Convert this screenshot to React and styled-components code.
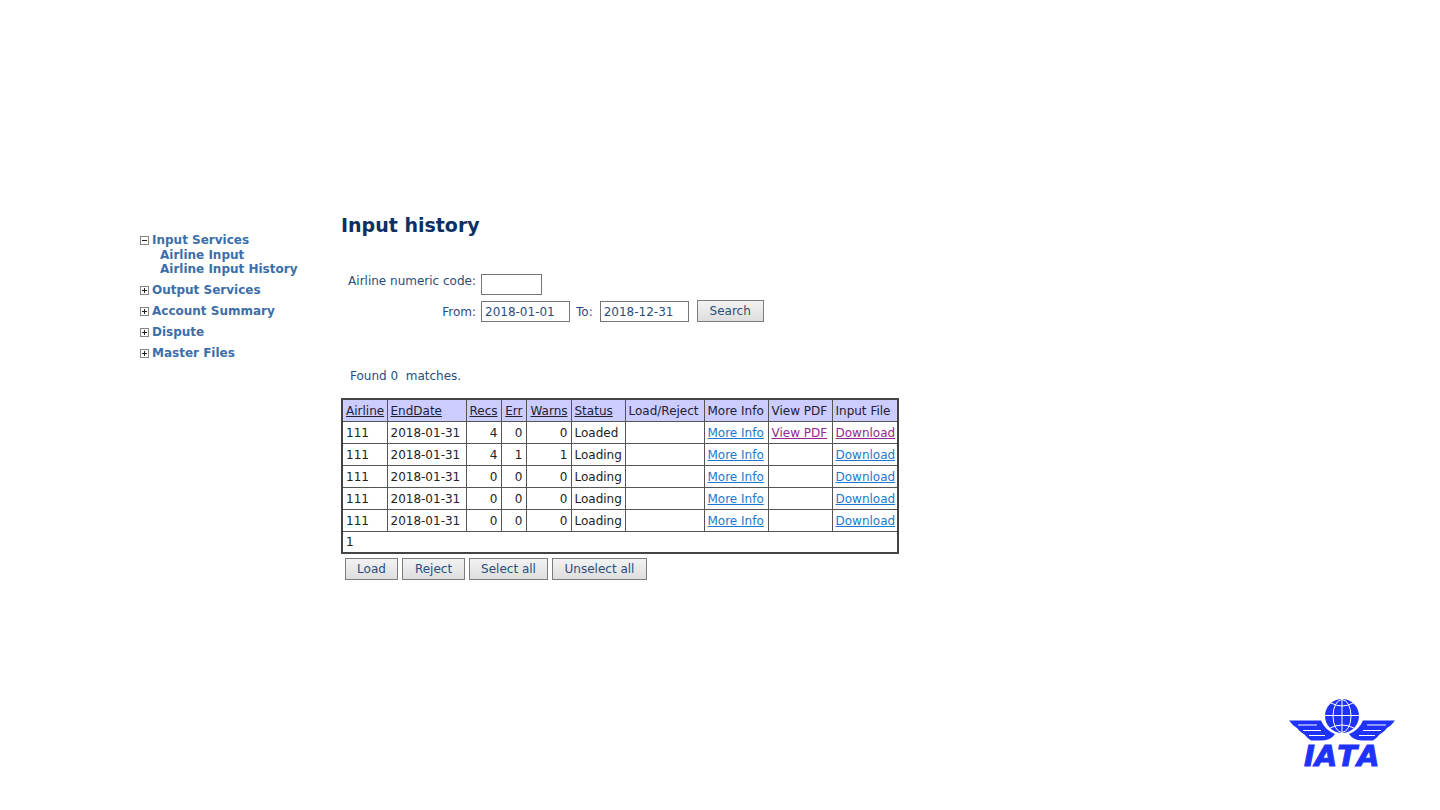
import React from 'react';
import styled, { createGlobalStyle } from 'styled-components';

const GlobalStyle = createGlobalStyle`
  *, *::before, *::after { box-sizing: border-box; }
  body {
    margin: 0;
    background: #fff;
    color: #2b4d7c;
    font: 12px/14px "DejaVu Sans", sans-serif;
  }
`;

const Page = styled.div`
  display: flex;
  flex-direction: column;
  min-height: 100vh;
  padding: 213px 44px 36px 140px;
`;

const Columns = styled.div`
  display: flex;
  align-items: flex-start;
`;

const Sidebar = styled.nav`
  flex: 0 0 201px;
  padding-top: 20px;
`;

const MenuList = styled.ul`
  display: flex;
  flex-direction: column;
  gap: 7px;
  margin: 0;
  padding: 0;
  list-style: none;
`;

const SubList = styled.ul`
  margin: 0;
  padding: 1px 0 0 20px;
  list-style: none;
`;

const MenuRow = styled.div`
  display: flex;
  align-items: center;
  gap: 3px;
`;

const MenuLink = styled.a`
  color: #3c6ea9;
  font-weight: bold;
  text-decoration: none;
  white-space: nowrap;
`;

const Toggle = styled.button`
  display: flex;
  width: 9px;
  height: 9px;
  padding: 0;
  border: 0;
  background: none;
`;

const Main = styled.main`
  min-width: 0;
`;

const Title = styled.h1`
  margin: 0;
  color: #0c3063;
  font-size: 19px;
  line-height: 24px;
`;

const SearchForm = styled.form`
  display: grid;
  grid-template-columns: 135px auto;
  justify-content: start;
  gap: 5px;
  margin-top: 37px;
`;

const FieldLabel = styled.label`
  text-align: right;
  padding-top: ${(p) => p.$top}px;
`;

const FieldRow = styled.div`
  display: flex;
  align-items: center;
`;

const TextBox = styled.input`
  width: ${(p) => p.$width}px;
  height: 21px;
  padding: 1px 3px 0;
  border: 1px solid #757575;
  background: #fff;
  color: inherit;
  font: inherit;
`;

const ToLabel = styled.label`
  padding: 1px 7px 0 6px;
`;

const Button = styled.button`
  height: 22px;
  min-width: ${(p) => p.$width}px;
  padding: 0;
  border: 1px solid #7c7c7c;
  background: linear-gradient(#f2f2f2, #dedede);
  color: inherit;
  font: inherit;
`;

const SearchButton = styled(Button)`
  margin-left: 8px;
`;

const Matches = styled.p`
  margin: 47px 0 15px 9px;
  white-space: pre;
`;

const HistoryTable = styled.table`
  width: 558px;
  table-layout: fixed;
  border-collapse: collapse;
  border: 2px solid #444;
  color: #222;
`;

const Cell = styled.td`
  height: 22px;
  padding: 1px 3px 0;
  border: 1px solid #555;
  text-align: ${(p) => (p.$right ? 'right' : 'left')};
  white-space: nowrap;
`;

const HeadCell = styled(Cell)`
  background: #ccf;
  color: #223;
  font-weight: normal;
`;

const SortLink = styled.a`
  color: inherit;
`;

const DataLink = styled.a`
  color: ${(p) => (p.$visited ? '#93278f' : '#1c78d2')};
`;

const Actions = styled.div`
  display: flex;
  gap: 4px;
  margin: 4px 0 0 4px;
`;

const Footer = styled.footer`
  display: flex;
  justify-content: flex-end;
  margin-top: auto;
`;

const LogoText = styled.text`
  font: italic bold 29px "DejaVu Sans", sans-serif;
  font-kerning: none;
  stroke: #1e32fa;
`;

function ToggleIcon({ open }) {
  return (
    <svg width="9" height="9" viewBox="0 0 9 9" shapeRendering="crispEdges" aria-hidden="true">
      <rect x="0.5" y="0.5" width="8" height="8" fill="#fff" stroke="#858585" />
      <path d={open ? 'M2 4.5h5' : 'M2 4.5h5M4.5 2v5'} stroke="#222" />
    </svg>
  );
}

function Logo() {
  const wing = 'M1 21.5H33Q37 31 47 35Q43 41 34 41.500H23Q20 40 17 36Q11 32 9 29Q4 26 1 21.500Z';
  const feathers = 'M10 26H29M15 31.5H33M21 36.5H37';
  return (
    <svg width="108" height="75" viewBox="0 0 108 75" role="img" aria-label="IATA">
      <g fill="#1e32fa">
        <circle cx="54" cy="17" r="17" />
        <path d={wing} />
        <path d={wing} transform="matrix(-1 0 0 1 108 0)" />
        <LogoText x="16" y="67">IATA</LogoText>
      </g>
      <g fill="none" stroke="#fff">
        <path d="M37 16.5H71M54 0V34M43 4Q54 10 65 4M42 29Q54 23 66 29" />
        <ellipse cx="54" cy="17" rx="9" ry="16.5" />
        <path d={feathers} />
        <path d={feathers} transform="matrix(-1 0 0 1 108 0)" />
      </g>
    </svg>
  );
}

const MENU = [
  { label: 'Input Services', children: ['Airline Input', 'Airline Input History'] },
  { label: 'Output Services' },
  { label: 'Account Summary' },
  { label: 'Dispute' },
  { label: 'Master Files' },
];

const COLUMNS = [
  { label: 'Airline', width: 45, sort: true },
  { label: 'EndDate', width: 79, sort: true },
  { label: 'Recs', width: 35, sort: true, right: true },
  { label: 'Err', width: 25, sort: true, right: true },
  { label: 'Warns', width: 45, sort: true, right: true },
  { label: 'Status', width: 54, sort: true },
  { label: 'Load/Reject', width: 79 },
  { label: 'More Info', width: 64 },
  { label: 'View PDF', width: 64 },
  { label: 'Input File', width: 66 },
];

const ROWS = [
  { recs: 4, err: 0, warns: 0, status: 'Loaded', pdf: true },
  { recs: 4, err: 1, warns: 1, status: 'Loading' },
  { recs: 0, err: 0, warns: 0, status: 'Loading' },
  { recs: 0, err: 0, warns: 0, status: 'Loading' },
  { recs: 0, err: 0, warns: 0, status: 'Loading' },
];

export default function App() {
  return (
    <>
      <GlobalStyle />
      <Page>
        <Columns>
          <Sidebar>
            <MenuList>
              {MENU.map((item) => (
                <li key={item.label}>
                  <MenuRow>
                    <Toggle type="button" aria-label={`Toggle ${item.label}`}>
                      <ToggleIcon open={Boolean(item.children)} />
                    </Toggle>
                    <MenuLink href="#">{item.label}</MenuLink>
                  </MenuRow>
                  {item.children && (
                    <SubList>
                      {item.children.map((child) => (
                        <li key={child}>
                          <MenuLink href="#">{child}</MenuLink>
                        </li>
                      ))}
                    </SubList>
                  )}
                </li>
              ))}
            </MenuList>
          </Sidebar>
          <Main>
            <Title>Input history</Title>
            <SearchForm onSubmit={(e) => e.preventDefault()}>
              <FieldLabel htmlFor="code" $top={0}>Airline numeric code:</FieldLabel>
              <FieldRow>
                <TextBox id="code" $width={61} />
              </FieldRow>
              <FieldLabel htmlFor="from" $top={5}>From:</FieldLabel>
              <FieldRow>
                <TextBox id="from" $width={89} defaultValue="2018-01-01" />
                <ToLabel htmlFor="to">To:</ToLabel>
                <TextBox id="to" $width={89} defaultValue="2018-12-31" />
                <SearchButton type="submit" $width={67}>Search</SearchButton>
              </FieldRow>
            </SearchForm>
            <Matches>{'Found 0  matches.'}</Matches>
            <HistoryTable>
              <colgroup>
                {COLUMNS.map((c) => (
                  <col key={c.label} width={c.width} />
                ))}
              </colgroup>
              <thead>
                <tr>
                  {COLUMNS.map((c) => (
                    <HeadCell as="th" scope="col" key={c.label} $right={c.right}>
                      {c.sort ? <SortLink href="#">{c.label}</SortLink> : c.label}
                    </HeadCell>
                  ))}
                </tr>
              </thead>
              <tbody>
                {ROWS.map((r, i) => (
                  <tr key={i}>
                    <Cell>111</Cell>
                    <Cell>2018-01-31</Cell>
                    <Cell $right>{r.recs}</Cell>
                    <Cell $right>{r.err}</Cell>
                    <Cell $right>{r.warns}</Cell>
                    <Cell>{r.status}</Cell>
                    <Cell />
                    <Cell><DataLink href="#">More Info</DataLink></Cell>
                    <Cell>{r.pdf && <DataLink href="#" $visited>View PDF</DataLink>}</Cell>
                    <Cell><DataLink href="#" $visited={r.pdf}>Download</DataLink></Cell>
                  </tr>
                ))}
                <tr>
                  <Cell colSpan={COLUMNS.length}>1</Cell>
                </tr>
              </tbody>
            </HistoryTable>
            <Actions>
              <Button type="button" $width={53}>Load</Button>
              <Button type="button" $width={63}>Reject</Button>
              <Button type="button" $width={79}>Select all</Button>
              <Button type="button" $width={95}>Unselect all</Button>
            </Actions>
          </Main>
        </Columns>
        <Footer>
          <Logo />
        </Footer>
      </Page>
    </>
  );
}
